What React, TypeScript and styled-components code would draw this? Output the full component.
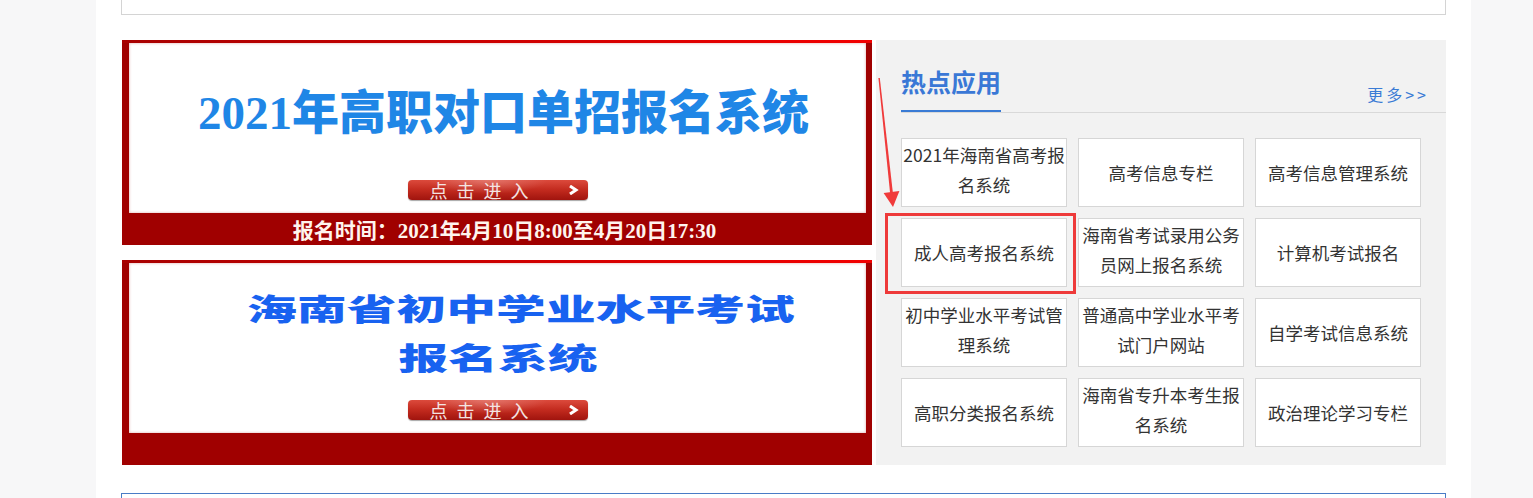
import React from 'react';
import styled, { createGlobalStyle } from 'styled-components';

const GlobalStyle = createGlobalStyle`
  body {
    margin: 0;
    background: #f7f7f8;
    font-family: 'Noto Sans CJK SC', 'Noto Sans', sans-serif;
  }
`;

const Page = styled.div`
  width: 1375px;
  margin-left: 96px;
  padding: 0 25px;
  box-sizing: border-box;
  background: #fff;
  min-height: 100vh;
`;

const TopBox = styled.div`
  height: 14px;
  border: 1px solid #d4d4d4;
  border-top: none;
  background: #fff;
`;

const MainRow = styled.div`
  display: flex;
  gap: 4px;
  margin-top: 25px;
  height: 425px;
`;

const BannerColumn = styled.div`
  display: flex;
  flex-direction: column;
  gap: 15px;
  width: 750px;
  margin-left: 1px;
`;

const BannerFrame = styled.div`
  height: 205px;
  display: flex;
  flex-direction: column;
  padding: 3px 6px 0 7px;
  box-sizing: border-box;
  background: linear-gradient(90deg, #a80000, #f20000) top / 100% 3px no-repeat, #a00000;
`;

const BannerCanvas = styled.div`
  height: 170px;
  flex-shrink: 0;
  display: flex;
  flex-direction: column;
  align-items: center;
  background: #fff;
  box-shadow: inset 0 0 3px rgba(160, 0, 0, 0.35);
`;

const BannerTitle = styled.div<{ $nudge?: number }>`
  margin-top: 46px;
  font-family: 'Liberation Serif', 'Noto Sans CJK SC', serif;
  font-weight: 900;
  font-size: 47px;
  line-height: 48px;
  color: #1f86e6;
  white-space: nowrap;
  transform: translateX(${p => p.$nudge ?? 0}px);
`;

const WideLine = styled.div<{ $top: number; $nudge?: number }>`
  margin-top: ${p => p.$top}px;
  font-family: 'Noto Sans CJK SC', sans-serif;
  font-weight: 900;
  font-size: 30px;
  line-height: 40px;
  color: #1862f0;
  white-space: nowrap;
  transform: translateX(${p => p.$nudge ?? 0}px) scaleX(1.66);
`;

const EnterButton = styled.div`
  margin-top: auto;
  margin-bottom: 13px;
  width: 180px;
  height: 20px;
  display: flex;
  align-items: center;
  padding-left: 22px;
  box-sizing: border-box;
  border-radius: 4px;
  background:
    radial-gradient(ellipse 60px 14px at 80px 0, rgba(255, 255, 255, 0.25), transparent),
    linear-gradient(180deg, #dc4a3c 0%, #c22a1e 50%, #a0140e 100%);
  box-shadow: 0 1px 1px rgba(0, 0, 0, 0.35);
  color: #f4e4e2;
  font-size: 18px;
  letter-spacing: 9px;
  line-height: 20px;

  svg {
    margin-left: auto;
    margin-right: 9px;
  }
`;

const BannerFooter = styled.div`
  flex: 1;
  display: flex;
  align-items: center;
  justify-content: center;
  padding-left: 14px;
  color: #fff4ee;
  font-family: 'Liberation Serif', 'Noto Sans CJK SC', serif;
  font-weight: 700;
  font-size: 21px;
`;

const Panel = styled.div`
  position: relative;
  width: 570px;
  background: #f2f2f2;
  padding: 24px 0 0 25px;
  box-sizing: border-box;
`;

const PanelHeader = styled.div`
  display: flex;
  justify-content: space-between;
  align-items: flex-end;
  border-bottom: 1px solid #d9d9d9;
`;

const PanelTitle = styled.div`
  font-size: 25px;
  font-weight: 700;
  line-height: 34px;
  color: #3a78d6;
  padding-bottom: 12px;
  border-bottom: 2px solid #3a7bd5;
`;

const MoreLink = styled.a`
  font-size: 16px;
  line-height: 20px;
  letter-spacing: 3px;
  margin: 0 17px 8px 0;
  color: #3a7bd5;
  text-decoration: none;
`;

const AppGrid = styled.div`
  display: grid;
  grid-template-columns: repeat(3, 166px);
  grid-auto-rows: 69px;
  gap: 11px;
  margin-top: 25px;
`;

// two-line names sit a little high in their box, single-line ones a touch low
const AppCell = styled.a<{ $wrapped: boolean }>`
  display: flex;
  align-items: center;
  justify-content: center;
  text-align: center;
  padding: ${p => (p.$wrapped ? '0 0 5px' : '2px 0 0')};
  box-sizing: border-box;
  background: #fff;
  border: 1px solid #d6d6d6;
  color: #333;
  font-size: 17.5px;
  line-height: 30.5px;
  text-decoration: none;
`;

const Highlight = styled.div`
  position: absolute;
  left: 9px;
  top: 173px;
  width: 191px;
  height: 81px;
  border: 3px solid #ee3a3a;
  box-sizing: border-box;
  pointer-events: none;
`;

const Arrow = styled.svg`
  position: absolute;
  left: 0;
  top: 30px;
  pointer-events: none;
`;

const BottomBox = styled.div`
  margin-top: 28px;
  height: 40px;
  border: 1px solid #4a7cc6;
`;

const apps = [
  '2021年海南省高考报名系统',
  '高考信息专栏',
  '高考信息管理系统',
  '成人高考报名系统',
  '海南省考试录用公务员网上报名系统',
  '计算机考试报名',
  '初中学业水平考试管理系统',
  '普通高中学业水平考试门户网站',
  '自学考试信息系统',
  '高职分类报名系统',
  '海南省专升本考生报名系统',
  '政治理论学习专栏',
];

const Chevron = () => (
  <svg width="11" height="10" viewBox="0 0 11 10">
    <polyline points="2,1 8,5 2,9" fill="none" stroke="#fff" strokeWidth="3" strokeLinejoin="miter" />
  </svg>
);

const App: React.FC = () => {
  return (
    <>
      <GlobalStyle />
      <Page>
        <TopBox />
        <MainRow>
          <BannerColumn>
            <BannerFrame>
              <BannerCanvas>
                <BannerTitle $nudge={6}>2021年高职对口单招报名系统</BannerTitle>
                <EnterButton>
                  点击进入
                  <Chevron />
                </EnterButton>
              </BannerCanvas>
              <BannerFooter>报名时间：2021年4月10日8:00至4月20日17:30</BannerFooter>
            </BannerFrame>
            <BannerFrame>
              <BannerCanvas>
                <WideLine $top={24} $nudge={23}>海南省初中学业水平考试</WideLine>
                <WideLine $top={9}>报名系统</WideLine>
                <EnterButton>
                  点击进入
                  <Chevron />
                </EnterButton>
              </BannerCanvas>
              <BannerFooter />
            </BannerFrame>
          </BannerColumn>

          <Panel>
            <PanelHeader>
              <PanelTitle>热点应用</PanelTitle>
              <MoreLink href="#">更多&gt;&gt;</MoreLink>
            </PanelHeader>
            <AppGrid>
              {apps.map(name => (
                <AppCell key={name} href="#" $wrapped={name.length > 9}>{name}</AppCell>
              ))}
            </AppGrid>
            <Highlight />
            <Arrow width="30" height="145" viewBox="0 0 30 145">
              <polygon points="2.4,8 3.8,8 16.9,123 14.1,123" fill="#f03a3a" />
              <polygon points="7.6,122.9 23.4,121.1 17,137" fill="#f03a3a" />
            </Arrow>
          </Panel>
        </MainRow>
        <BottomBox />
      </Page>
    </>
  );
};

export default App;
